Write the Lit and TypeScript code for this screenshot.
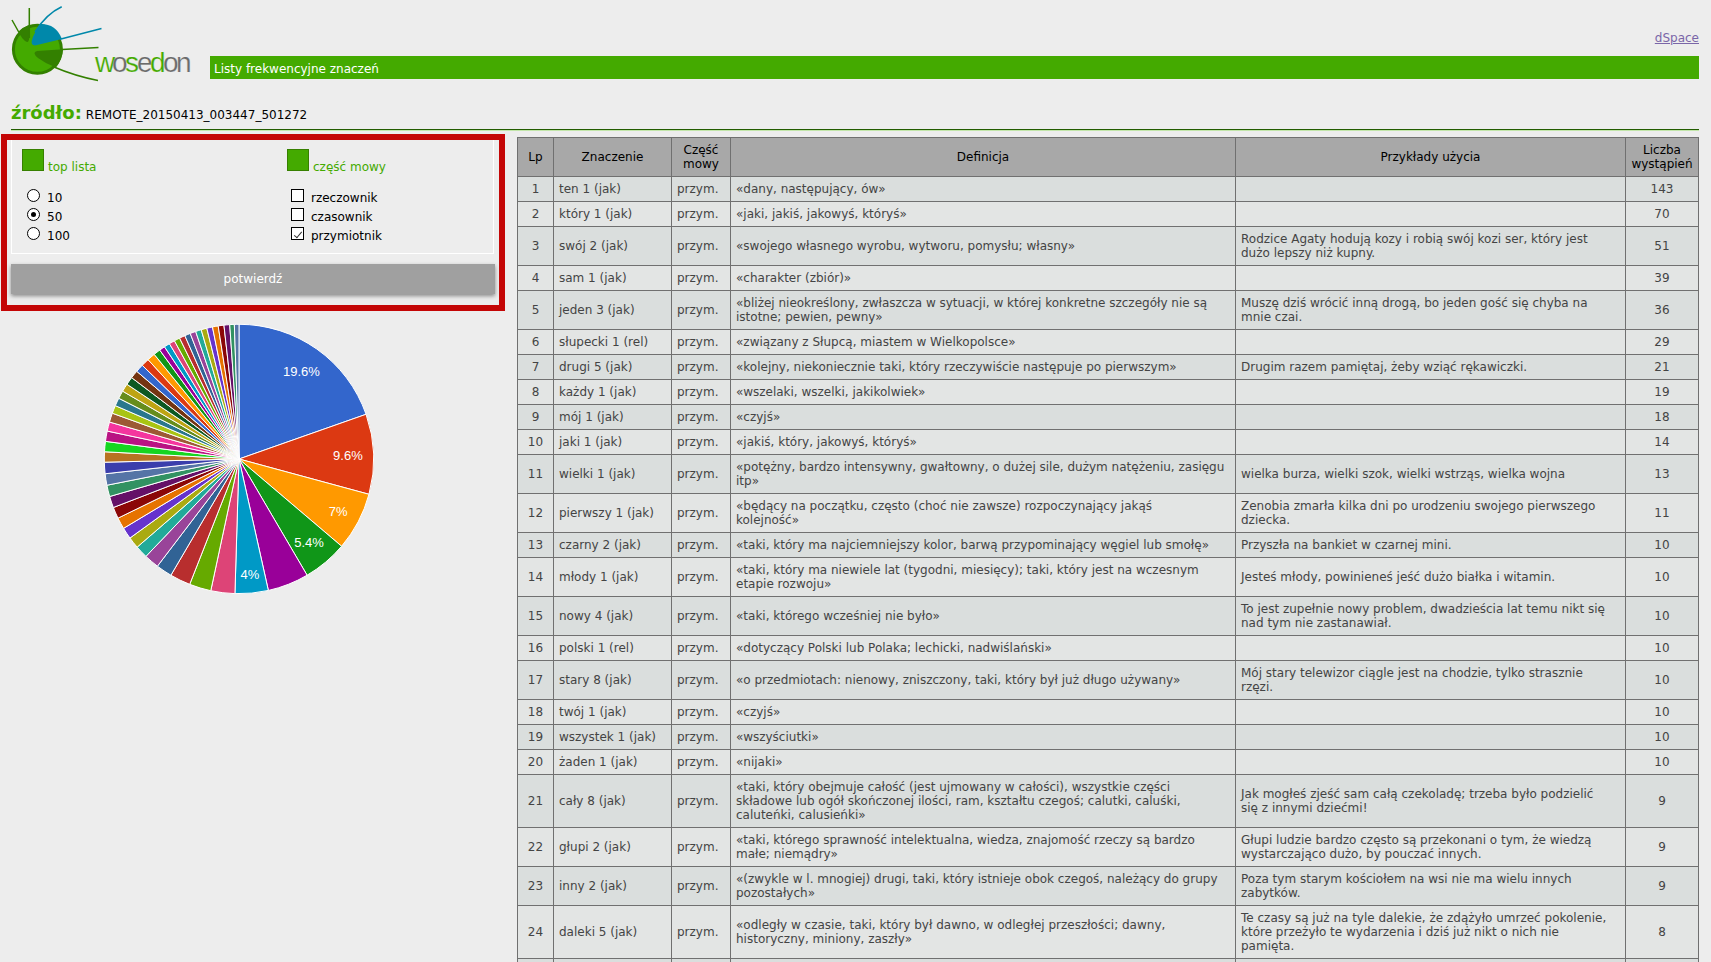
import { LitElement, html, svg, css } from "lit";
import { customElement } from "lit/decorators.js";

type Row = [string, string, string, number];

const ROWS: Row[] = [
  ["ten 1 (jak)", "«dany, następujący, ów»", "", 143],
  ["który 1 (jak)", "«jaki, jakiś, jakowyś, któryś»", "", 70],
  ["swój 2 (jak)", "«swojego własnego wyrobu, wytworu, pomysłu; własny»", "Rodzice Agaty hodują kozy i robią swój kozi ser, który jest dużo lepszy niż kupny.", 51],
  ["sam 1 (jak)", "«charakter (zbiór)»", "", 39],
  ["jeden 3 (jak)", "«bliżej nieokreślony, zwłaszcza w sytuacji, w której konkretne szczegóły nie są istotne; pewien, pewny»", "Muszę dziś wrócić inną drogą, bo jeden gość się chyba na mnie czai.", 36],
  ["słupecki 1 (rel)", "«związany z Słupcą, miastem w Wielkopolsce»", "", 29],
  ["drugi 5 (jak)", "«kolejny, niekoniecznie taki, który rzeczywiście następuje po pierwszym»", "Drugim razem pamiętaj, żeby wziąć rękawiczki.", 21],
  ["każdy 1 (jak)", "«wszelaki, wszelki, jakikolwiek»", "", 19],
  ["mój 1 (jak)", "«czyjś»", "", 18],
  ["jaki 1 (jak)", "«jakiś, który, jakowyś, któryś»", "", 14],
  ["wielki 1 (jak)", "«potężny, bardzo intensywny, gwałtowny, o dużej sile, dużym natężeniu, zasięgu itp»", "wielka burza, wielki szok, wielki wstrząs, wielka wojna", 13],
  ["pierwszy 1 (jak)", "«będący na początku, często (choć nie zawsze) rozpoczynający jakąś\nkolejność»", "Zenobia zmarła kilka dni po urodzeniu swojego pierwszego dziecka.", 11],
  ["czarny 2 (jak)", "«taki, który ma najciemniejszy kolor, barwą przypominający węgiel lub smołę»", "Przyszła na bankiet w czarnej mini.", 10],
  ["młody 1 (jak)", "«taki, który ma niewiele lat (tygodni, miesięcy); taki, który jest na wczesnym etapie rozwoju»", "Jesteś młody, powinieneś jeść dużo białka i witamin.", 10],
  ["nowy 4 (jak)", "«taki, którego wcześniej nie było»", "To jest zupełnie nowy problem, dwadzieścia lat temu nikt się nad tym nie zastanawiał.", 10],
  ["polski 1 (rel)", "«dotyczący Polski lub Polaka; lechicki, nadwiślański»", "", 10],
  ["stary 8 (jak)", "«o przedmiotach: nienowy, zniszczony, taki, który był już długo używany»", "Mój stary telewizor ciągle jest na chodzie, tylko strasznie rzęzi.", 10],
  ["twój 1 (jak)", "«czyjś»", "", 10],
  ["wszystek 1 (jak)", "«wszyściutki»", "", 10],
  ["żaden 1 (jak)", "«nijaki»", "", 10],
  ["cały 8 (jak)", "«taki, który obejmuje całość (jest ujmowany w całości), wszystkie części\nskładowe lub ogół skończonej ilości, ram, kształtu czegoś; calutki, caluśki,\ncaluteńki, calusieńki»", "Jak mogłeś zjeść sam całą czekoladę; trzeba było podzielić się z innymi dziećmi!", 9],
  ["głupi 2 (jak)", "«taki, którego sprawność intelektualna, wiedza, znajomość rzeczy są bardzo małe; niemądry»", "Głupi ludzie bardzo często są przekonani o tym, że wiedzą wystarczająco dużo, by pouczać innych.", 9],
  ["inny 2 (jak)", "«(zwykle w l. mnogiej) drugi, taki, który istnieje obok czegoś, należący do grupy pozostałych»", "Poza tym starym kościołem na wsi nie ma wielu innych zabytków.", 9],
  ["daleki 5 (jak)", "«odległy w czasie, taki, który był dawno, w odległej przeszłości; dawny, historyczny, miniony, zaszły»", "Te czasy są już na tyle dalekie, że zdążyło umrzeć pokolenie, które przeżyło te wydarzenia i dziś już nikt o nich nie pamięta.", 8],
];

// Counts of the meanings ranked 25 to 50.
const TAIL = [8, 7, 7, 7, 7, 7, 7, 7, 7, 7, 6, 5, 5, 5, 5, 5, 5, 5, 5, 5, 5, 5, 5, 5, 4, 4];

const PALETTE = [
  "#3366cc", "#dc3912", "#ff9900", "#109618", "#990099", "#0099c6", "#dd4477", "#66aa00",
  "#b82e2e", "#316395", "#994499", "#22aa99", "#aaaa11", "#6633cc", "#e67300", "#8b0707",
  "#651067", "#329262", "#5574a6", "#3b3eac", "#b77322", "#16d620", "#b91383", "#f4359e",
  "#9c5935", "#a9c413", "#2a778d", "#668d1c", "#bea413", "#0c5922", "#743411",
];

@customElement("frequency-pie")
export class FrequencyPie extends LitElement {
  static styles = css`
    :host { display: block; }
    .pie { display: block; width: 270px; height: 270px; margin: 0 auto; overflow: visible; }
    .slice { stroke: #fff; stroke-width: 1; }
    .label { font: 13px "Liberation Sans", Arial, sans-serif; fill: #fff; text-anchor: middle; }
  `;

  render() {
    const values = [...ROWS.map((r) => r[3]), ...TAIL];
    const total = values.reduce((a, b) => a + b, 0);
    const r = 134.7;
    const labelled: Record<number, [string, number]> = {
      0: ["19.6%", 108], 1: ["9.6%", 109], 2: ["7%", 112], 3: ["5.4%", 109], 5: ["4%", 116],
    };
    const at = (turn: number, d: number) => [d * Math.sin(turn * 2 * Math.PI), -d * Math.cos(turn * 2 * Math.PI)];
    let sum = 0;
    const slices = values.map((v, i) => {
      const from = sum / total;
      sum += v;
      const to = sum / total;
      const [x1, y1] = at(from, r);
      const [x2, y2] = at(to, r);
      const label = labelled[i];
      const [lx, ly] = at((from + to) / 2, label ? label[1] : 0);
      return {
        path: svg`<path class="slice" fill=${PALETTE[i % PALETTE.length]} d="M0 0L${x1} ${y1}A${r} ${r} 0 0 1 ${x2} ${y2}Z"></path>`,
        label: label ? svg`<text class="label" x=${lx} y=${ly + 5}>${label[0]}</text>` : null,
      };
    });
    return html`<svg class="pie" viewBox="-135 -135 270 270" role="img" aria-label="Udział znaczeń">
      ${slices.map((s) => s.path)}${slices.map((s) => s.label)}
    </svg>`;
  }
}

@customElement("app-root")
export class AppRoot extends LitElement {
  static styles = css`
    :host {
      display: block;
      box-sizing: border-box;
      height: 100vh;
      overflow: hidden;
      padding: 0 12px 0 11px;
      background: #ededed;
      color: #000;
      font: 12px/14px "DejaVu Sans", Verdana, sans-serif;
    }
    .header { display: flex; align-items: flex-end; height: 79px; }
    .logo { display: block; flex: none; width: 199px; height: 79px; overflow: visible; }
    .brand { font: 28px "Liberation Sans", Arial, sans-serif; stroke: #ededed; stroke-width: 0.2; }
    .brand-green { fill: #44aa00; }
    .brand-grey { fill: #6b6b6b; }
    .top { flex: 1; display: flex; flex-direction: column; }
    .link { align-self: flex-end; margin-bottom: 11px; color: #7a66a8; }
    .bar { box-sizing: border-box; height: 23px; padding: 6px 4px 3px; background: #44aa00; color: #fff; }
    .source { display: flex; align-items: baseline; gap: 4px; margin-top: 22px; padding-bottom: 5px; border-bottom: 1px solid #225c00; box-shadow: 0 1px 0 #c3e6ab; }
    .source-title { margin: 0; color: #44aa00; font-size: 18px; line-height: 23px; }
    .columns { display: flex; align-items: flex-start; gap: 12px; margin-top: 4px; }
    .side { flex: 0 0 504px; min-width: 0; margin-left: -10px; }
    .frame { box-sizing: border-box; height: 177px; border: 6px solid #c40606; padding: 0 4px; }
    .filters { display: flex; box-sizing: border-box; height: 114px; margin-right: 1px; border: 1px solid #fff; border-top: 0; padding: 9px 10px 0; }
    .group { flex: 0 0 265px; min-width: 0; border: 0; margin: 0; padding: 0; }
    .group + .group { flex: 1 1 0; }
    .heading { display: flex; align-items: flex-end; gap: 4px; padding: 0; margin-bottom: 17px; color: #44aa00; }
    .square { box-sizing: border-box; width: 22px; height: 22px; border: 1px solid #378000; background: #44aa00; }
    .heading-text { line-height: 8px; }
    .option { display: flex; align-items: center; height: 19px; gap: 7px; padding-left: 4px; }
    .mark { appearance: none; box-sizing: border-box; width: 13px; height: 13px; margin: 0 0 4px; border: 1px solid #000; background: #fff; display: grid; place-items: center; }
    .radio { border-radius: 50%; margin-left: 1px; }
    .radio:checked::before { content: ""; width: 5px; height: 5px; border-radius: 50%; background: #000; }
    .check:checked::before { content: ""; width: 7px; height: 3px; border: solid #333; border-width: 0 0 1px 1px; transform: rotate(-50deg); }
    .confirm { display: block; width: 100%; height: 30px; margin: 10px 0 0; border: 0; background: #a0a0a0; color: #fff; font: inherit; box-shadow: 0 2px 4px #888; }
    .chart { display: block; margin-top: 13px; padding-right: 28px; }
    .table { flex: 1; min-width: 0; width: 100%; table-layout: fixed; border-collapse: collapse; margin-top: 3px; }
    .c-lp { width: 36px; }
    .c-meaning { width: 118px; }
    .c-part { width: 59px; }
    .c-examples { width: 390px; }
    .c-count { width: 73px; }
    .th, .td { border: 1px solid #707070; padding: 5px; font-weight: normal; vertical-align: middle; text-align: left; }
    .th { padding: 5px 2px; background: #a8a8a8; text-align: center; }
    .row { height: 25px; background: #e3e5e4; color: #444; }
    .row:nth-child(odd) { background: #dadedd; }
    .num { text-align: center; }
    .definition { white-space: pre-line; }
    .example { padding-right: 16px; }
  `;

  render() {
    return html`
      <header class="header">
        <svg class="logo" viewBox="11 0 199 79" role="img" aria-label="wosedon">
          <circle cx="37.4" cy="49.3" r="24" fill="#44aa00" stroke="#338000" stroke-width="3"></circle>
          <path d="M18.500 31.500Q23 27 29.500 25V36Q29 42.500 27 42Q22 40 18.500 31.500Z" fill="#338000"></path>
          <path d="M41 24Q56 24 62 39L36 45.300Q31 46 31.700 41Q34 32 41 24Z" fill="#0088aa"></path>
          <path d="M63 49.300L37 51Q31.500 52.500 38 58Q46 64 56 67.500Q62 60 63 49.300Z" fill="#338000"></path>
          <path d="M12 20L19 32.500M29.300 8V38M62 49.500L98.500 47.500M54 67Q75 76 98 80.500" fill="none" stroke="#338000" stroke-width="1.500"></path>
          <path d="M35 32Q46 14 61.700 6.700M60 39.300L101.500 28.500" fill="none" stroke="#0088aa" stroke-width="1.500"></path>
          <text class="brand" y="72"><tspan class="brand-green" x="95">w</tspan><tspan class="brand-grey" x="112">o</tspan><tspan class="brand-green" x="125">s</tspan><tspan class="brand-grey" x="137">e</tspan><tspan class="brand-green" x="150">d</tspan><tspan class="brand-grey" x="163">o</tspan><tspan class="brand-grey" x="176">n</tspan></text>
        </svg>
        <div class="top">
          <a class="link" href="#dspace">dSpace</a>
          <div class="bar">Listy frekwencyjne znaczeń</div>
        </div>
      </header>
      <div class="source"><h2 class="source-title">źródło:</h2><span>REMOTE_20150413_003447_501272</span></div>
      <main class="columns">
        <section class="side">
          <form class="frame" @submit=${(e: Event) => e.preventDefault()}>
            <div class="filters">
              <fieldset class="group">
                <legend class="heading"><span class="square"></span><span class="heading-text">top lista</span></legend>
                ${["10", "50", "100"].map((v) => html`<label class="option"><input class="mark radio" type="radio" name="top" value=${v} ?checked=${v === "50"}>${v}</label>`)}
              </fieldset>
              <fieldset class="group">
                <legend class="heading"><span class="square"></span><span class="heading-text">część mowy</span></legend>
                ${["rzeczownik", "czasownik", "przymiotnik"].map((v) => html`<label class="option"><input class="mark check" type="checkbox" name="part" value=${v} ?checked=${v === "przymiotnik"}>${v}</label>`)}
              </fieldset>
            </div>
            <button class="confirm" type="submit">potwierdź</button>
          </form>
          <frequency-pie class="chart"></frequency-pie>
        </section>
        <table class="table">
          <colgroup><col class="c-lp"><col class="c-meaning"><col class="c-part"><col><col class="c-examples"><col class="c-count"></colgroup>
          <thead>
            <tr>${["Lp", "Znaczenie", "Część mowy", "Definicja", "Przykłady użycia", "Liczba wystąpień"].map((h) => html`<th class="th" scope="col">${h}</th>`)}</tr>
          </thead>
          <tbody>
            ${ROWS.map((r, i) => html`<tr class="row"><td class="td num">${i + 1}</td><td class="td">${r[0]}</td><td class="td">przym.</td><td class="td definition">${r[1]}</td><td class="td example">${r[2]}</td><td class="td num">${r[3]}</td></tr>`)}
            <tr class="row"><td class="td"></td><td class="td"></td><td class="td"></td><td class="td"></td><td class="td"></td><td class="td"></td></tr>
          </tbody>
        </table>
      </main>
    `;
  }
}
